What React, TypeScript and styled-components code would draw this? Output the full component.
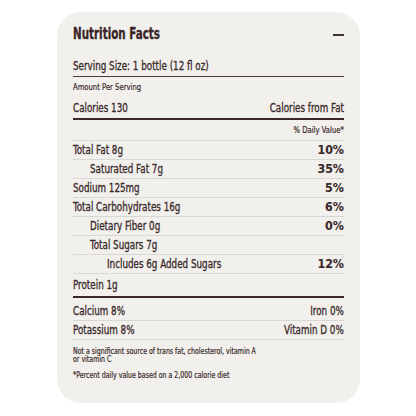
import React from "react";
import styled, { createGlobalStyle } from "styled-components";

const Global = createGlobalStyle`
  html, body { margin: 0; padding: 0; background: #ffffff; }
  body { font-family: "DejaVu Sans Condensed", "DejaVu Sans", sans-serif; color: #3a292a; }
`;

const Page = styled.div`
  width: 416px;
  height: 416px;
  display: flex;
  justify-content: center;
  padding-top: 12px;
  box-sizing: border-box;
`;

const Card = styled.section`
  width: 303px;
  height: 391px;
  box-sizing: border-box;
  background: #f1f0ec;
  border-radius: 24px;
  padding: 0 16px;
  display: flex;
  flex-direction: column;
`;

const Header = styled.div`
  display: flex;
  justify-content: space-between;
  align-items: center;
  height: 44px;
`;

const Cond = styled.span<{ $right?: boolean; $scale?: number }>`
  display: inline-block;
  white-space: nowrap;
  transform: scaleX(${(p) => p.$scale ?? 0.75});
  transform-origin: ${(p) => (p.$right ? "right" : "left")} center;
  -webkit-text-stroke: 0.32px currentColor;
`;

const Title = styled.h2`
  margin: 0;
  font-size: 16px;
  line-height: 20px;
  font-weight: 700;
  color: #3a2425;
`;

const Minus = styled.span`
  width: 11px;
  height: 2px;
  background: #393536;
  margin-top: 1px;
`;

type Line = "thin" | "thick" | "med" | "none";

const Row = styled.div<{ $indent?: number; $line?: Line; $h?: number; $pt?: number }>`
  display: flex;
  justify-content: space-between;
  align-items: center;
  height: ${(p) => p.$h ?? 19}px;
  padding-left: ${(p) => (p.$indent ?? 0) * 17}px;
  padding-top: ${(p) => p.$pt ?? 0}px;
  font-size: 13px;
  line-height: 16px;
  border-bottom: ${(p) =>
    p.$line === "thick"
      ? "2px solid #3a2829"
      : p.$line === "med"
      ? "1px solid #4b3a3b"
      : p.$line === "none"
      ? "none"
      : "1px solid #d9d7d2"};
  box-sizing: border-box;
`;

const Small = styled(Cond)`
  font-size: 9.5px;
  line-height: 10px;
  -webkit-text-stroke: 0.2px currentColor;
`;

const Pct = styled(Cond)`
  font-size: 13px;
  font-weight: 700;
  -webkit-text-stroke: 0.1px currentColor;
`;

const Notes = styled.div`
  display: flex;
  flex-direction: column;
  gap: 9px;
  padding-top: 8px;
  font-size: 8.5px;
  line-height: 7.5px;
`;

const Note = styled(Cond)`
  white-space: normal;
  width: 228px;
  -webkit-text-stroke: 0.2px currentColor;
`;

type Item = { label: string; pct?: string; indent?: number };

const items: Item[] = [
  { label: "Total Fat 8g", pct: "10%" },
  { label: "Saturated Fat 7g", pct: "35%", indent: 1 },
  { label: "Sodium 125mg", pct: "5%" },
  { label: "Total Carbohydrates 16g", pct: "6%" },
  { label: "Dietary Fiber 0g", pct: "0%", indent: 1 },
  { label: "Total Sugars 7g", indent: 1 },
  { label: "Includes 6g Added Sugars", pct: "12%", indent: 2 },
];

export default function App() {
  return (
    <>
      <Global />
      <Page>
        <Card>
          <Header>
            <Title>
              <Cond $scale={0.72}>Nutrition Facts</Cond>
            </Title>
            <Minus />
          </Header>
          <Row $line="med" $h={21}>
            <Cond>Serving Size: 1 bottle (12 fl oz)</Cond>
          </Row>
          <Row $line="none" $h={20}>
            <Small $scale={0.8}>Amount Per Serving</Small>
          </Row>
          <Row $line="thick" $h={23}>
            <Cond>Calories 130</Cond>
            <Cond $right>Calories from Fat</Cond>
          </Row>
          <Row $h={21}>
            <span />
            <Small $right $scale={0.8}>% Daily Value*</Small>
          </Row>
          {items.map((it) => (
            <Row key={it.label} $indent={it.indent}>
              <Cond>{it.label}</Cond>
              {it.pct && (
                <Pct $right $scale={0.95}>
                  {it.pct}
                </Pct>
              )}
            </Row>
          ))}
          <Row $line="thick" $h={24}>
            <Cond>Protein 1g</Cond>
          </Row>
          <Row $h={23} $pt={3}>
            <Cond>Calcium 8%</Cond>
            <Cond $right>Iron 0%</Cond>
          </Row>
          <Row>
            <Cond>Potassium 8%</Cond>
            <Cond $right>Vitamin D 0%</Cond>
          </Row>
          <Notes>
            <Note $scale={0.82}>Not a significant source of trans fat, cholesterol, vitamin A or vitamin C</Note>
            <Note $scale={0.82}>*Percent daily value based on a 2,000 calorie diet</Note>
          </Notes>
        </Card>
      </Page>
    </>
  );
}
